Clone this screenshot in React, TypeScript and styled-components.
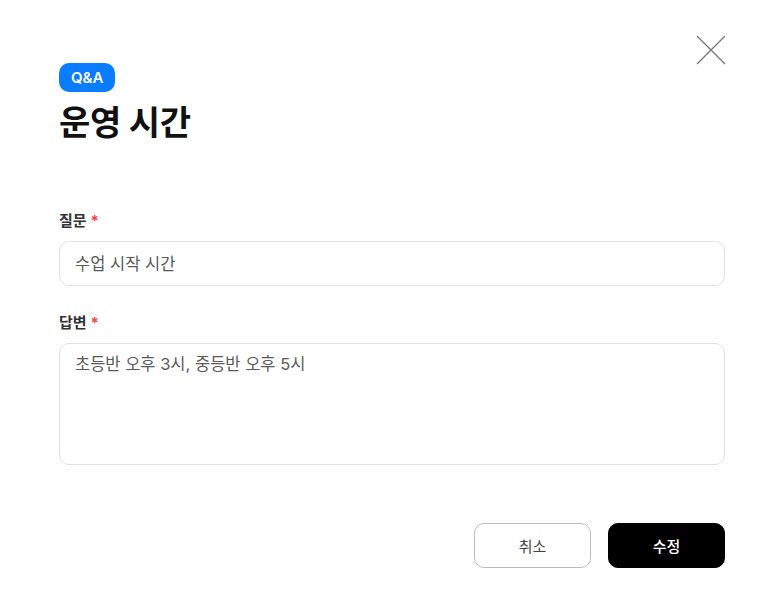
import React from "react";
import styled, { createGlobalStyle } from "styled-components";

const GlobalStyle = createGlobalStyle`
  * {
    box-sizing: border-box;
  }
  body {
    margin: 0;
    background: #fff;
    font-family: Inter, "Noto Sans CJK KR", sans-serif;
    color: #111;
  }
`;

const Page = styled.div`
  width: 784px;
  height: 604px;
  padding: 35px 59px 0;
  display: flex;
  flex-flow: column;
`;

const TopBar = styled.div`
  display: flex;
  justify-content: flex-end;
  height: 28px;
`;

const CloseButton = styled.button`
  width: 30px;
  height: 30px;
  padding: 0;
  margin-right: -1px;
  border: none;
  background: none;
  cursor: pointer;
  display: flex;
  align-items: center;
  justify-content: center;
`;

const Badge = styled.span`
  align-self: flex-start;
  display: inline-flex;
  align-items: center;
  height: 29px;
  padding: 0 12px;
  border-radius: 10px;
  background-color: #0a7cff;
  color: #fff;
  font-size: 15px;
  font-weight: 600;
`;

const Title = styled.h1`
  margin: 10px 0 0;
  font-size: 34px;
  line-height: 42px;
  font-weight: 700;
  color: #111;
  letter-spacing: -0.3px;
`;

const Form = styled.div`
  display: flex;
  flex-flow: column;
  margin-top: 66px;
`;

const Label = styled.div`
  font-size: 15px;
  font-weight: 700;
  color: #333;
  line-height: 22px;
  margin-bottom: 9px;

  span {
    color: #ff3b3b;
    margin-left: 4px;
  }
`;

const Field = styled.div<{ $height: number }>`
  height: ${(p) => p.$height}px;
  border: 1px solid #e2e2e2;
  border-radius: 10px;
  padding: ${(p) => (p.$height > 60 ? "8px 15px" : "0 15px")};
  display: flex;
  align-items: ${(p) => (p.$height > 60 ? "flex-start" : "center")};
  font-size: 16.5px;
  color: #5a5a5a;
  line-height: 24px;
  margin-bottom: 26px;
`;

const Actions = styled.div`
  display: flex;
  justify-content: flex-end;
  gap: 17px;
  margin-top: 32px;
`;

const Button = styled.button<{ $primary?: boolean }>`
  width: 117px;
  height: 45px;
  border-radius: 10px;
  border: 1px solid ${(p) => (p.$primary ? "#000" : "#bdbdbd")};
  background-color: ${(p) => (p.$primary ? "#000" : "#fff")};
  color: ${(p) => (p.$primary ? "#fff" : "#444")};
  font-family: inherit;
  font-size: 15px;
  font-weight: ${(p) => (p.$primary ? 500 : 400)};
  cursor: pointer;
`;

const App = () => {
  return (
    <>
      <GlobalStyle />
      <Page>
        <TopBar>
          <CloseButton aria-label="닫기">
            <svg width="30" height="30" viewBox="0 0 30 30">
              <path d="M1 1 L29 29 M29 1 L1 29" stroke="#777" strokeWidth="1.3" fill="none" />
            </svg>
          </CloseButton>
        </TopBar>
        <Badge>Q&amp;A</Badge>
        <Title>운영 시간</Title>
        <Form>
          <Label>
            질문<span>*</span>
          </Label>
          <Field $height={45}>수업 시작 시간</Field>
          <Label>
            답변<span>*</span>
          </Label>
          <Field $height={122}>초등반 오후 3시, 중등반 오후 5시</Field>
        </Form>
        <Actions>
          <Button>취소</Button>
          <Button $primary>수정</Button>
        </Actions>
      </Page>
    </>
  );
};

export default App;
